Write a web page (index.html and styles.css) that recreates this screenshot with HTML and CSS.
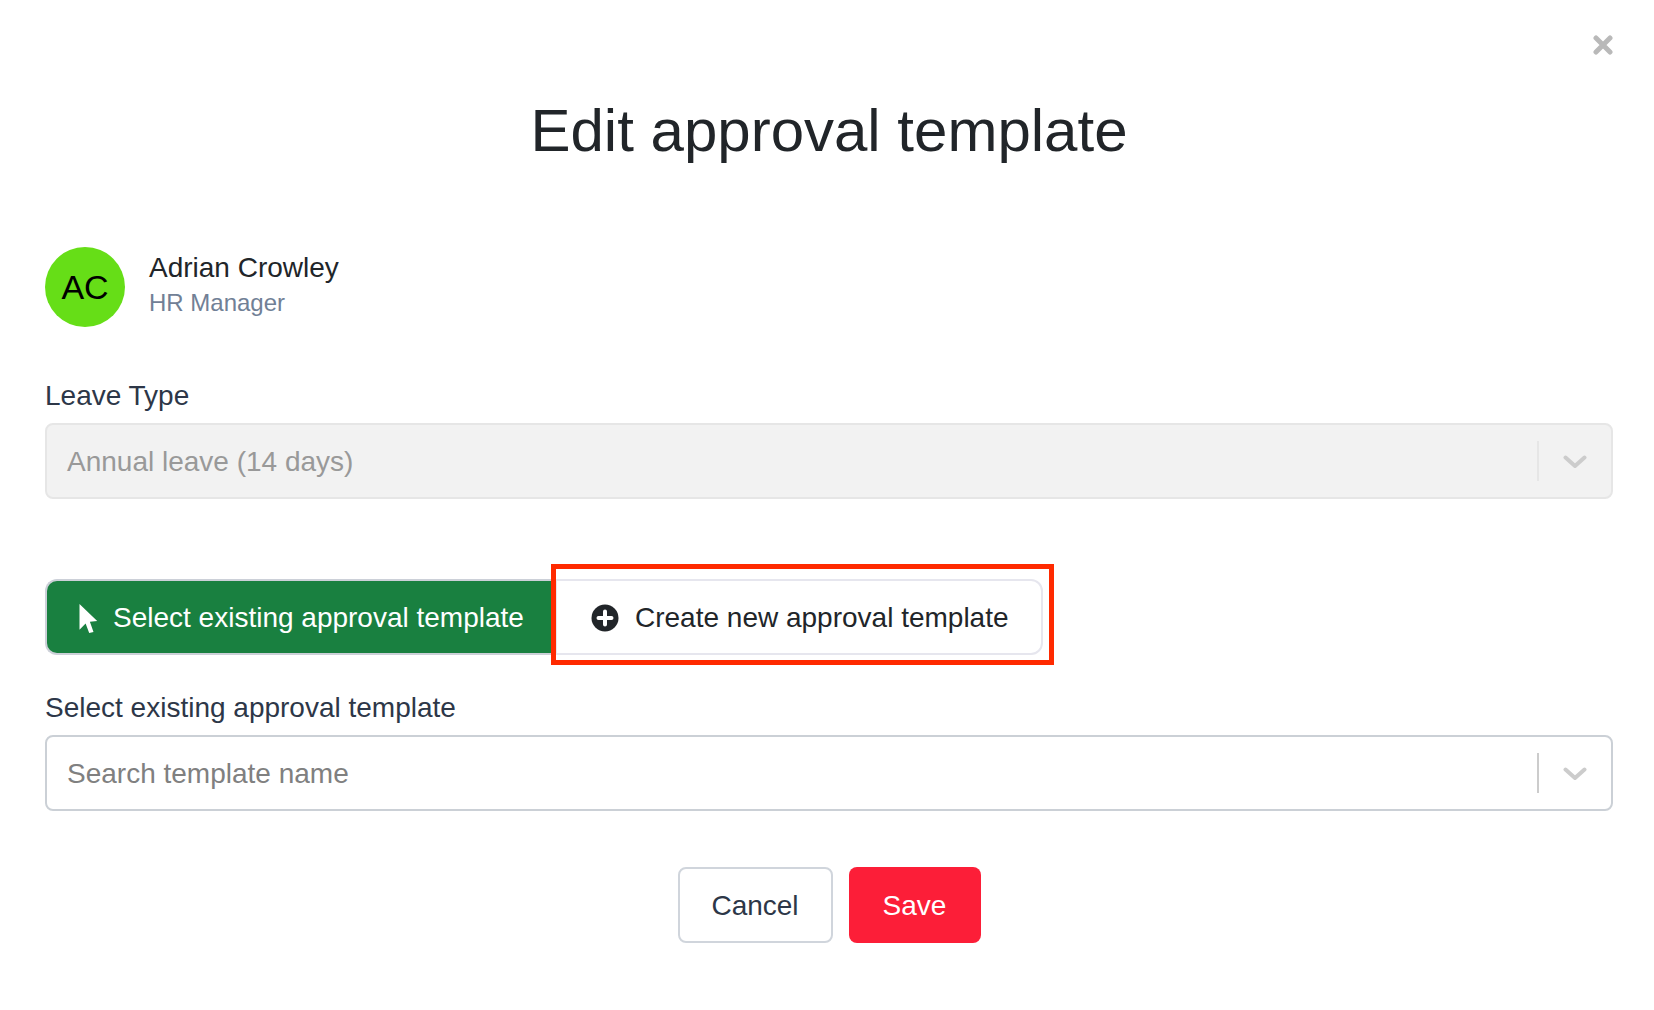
FILE: index.html
```html
<!DOCTYPE html>
<html lang="en">

<head>
    <meta charset="UTF-8">
    <title>Edit approval template</title>
    <link rel="stylesheet" href="styles.css">
</head>

<body>
    <div class="modal">
        <button class="close-btn" aria-label="Close">
            <svg width="20" height="20" viewBox="0 0 20 20">
                <path d="M3 3L17 17M17 3L3 17" stroke="#b9b9b9" stroke-width="5" stroke-linecap="round" fill="none" />
            </svg>
        </button>

        <h1 class="title">Edit approval template</h1>

        <div class="user">
            <div class="avatar">AC</div>
            <div class="user-info">
                <div class="user-name">Adrian Crowley</div>
                <div class="user-role">HR Manager</div>
            </div>
        </div>

        <label class="field-label">Leave Type</label>
        <div class="select select-disabled">
            <span class="select-value">Annual leave (14 days)</span>
            <span class="select-sep"></span>
            <svg class="select-arrow" width="24" height="14" viewBox="0 0 24 14">
                <path d="M2.5 2.5L12 11L21.5 2.5" stroke="#cccccc" stroke-width="4" fill="none" stroke-linecap="round" stroke-linejoin="round" />
            </svg>
        </div>

        <div class="toggle-group">
            <button class="toggle toggle-active">
                <svg width="19" height="29" viewBox="0 0 19 29">
                    <path d="M0.5 0L0.5 25.7L6.6 19.6L10.2 29L14.5 28L10.9 17.8L18.2 17.1Z" fill="#ffffff" />
                </svg>
                Select existing approval template
            </button>
            <button class="toggle toggle-new">
                <svg width="28" height="28" viewBox="0 0 28 28">
                    <circle cx="14" cy="14" r="13.5" fill="#212529" />
                    <path d="M14 7.5V20.5M7.5 14H20.5" stroke="#ffffff" stroke-width="4" stroke-linecap="round" />
                </svg>
                Create new approval template
            </button>
            <div class="highlight"></div>
        </div>

        <label class="field-label">Select existing approval template</label>
        <div class="select">
            <span class="select-value">Search template name</span>
            <span class="select-sep"></span>
            <svg class="select-arrow" width="24" height="14" viewBox="0 0 24 14">
                <path d="M2.5 2.5L12 11L21.5 2.5" stroke="#cccccc" stroke-width="4" fill="none" stroke-linecap="round" stroke-linejoin="round" />
            </svg>
        </div>

        <div class="actions">
            <button class="btn btn-cancel">Cancel</button>
            <button class="btn btn-save">Save</button>
        </div>
    </div>
</body>

</html>
```

FILE: styles.css
```css
* {
    box-sizing: border-box;
}

body {
    margin: 0;
    background: #fff;
    font-family: "Liberation Sans", Arial, sans-serif;
    color: #212529;
}

button {
    font-family: inherit;
}

.modal {
    position: relative;
    width: 1654px;
    height: 1010px;
    padding: 93px 41px 0 45px;
}

.close-btn {
    position: absolute;
    top: 35px;
    right: 41px;
    padding: 0;
    border: 0;
    background: none;
    display: flex;
}

.title {
    margin: 0 0 78px;
    text-align: center;
    font-size: 60px;
    line-height: 76px;
    font-weight: 400;
}

.user {
    display: flex;
    align-items: center;
    gap: 24px;
    margin-bottom: 51px;
}

.avatar {
    width: 80px;
    height: 80px;
    border-radius: 50%;
    background: #66de17;
    color: #000;
    font-size: 34px;
    display: flex;
    align-items: center;
    justify-content: center;
}

.user-info {
    margin-top: -4px;
}

.user-name {
    font-size: 28px;
    line-height: 36px;
}

.user-role {
    font-size: 24px;
    line-height: 34px;
    color: #718096;
}

.field-label {
    display: block;
    font-size: 28px;
    line-height: 36px;
    color: #2d3748;
    margin-bottom: 9px;
}

.select {
    height: 76px;
    border: 2px solid #cbd0d6;
    border-radius: 8px;
    display: flex;
    align-items: center;
    padding: 0 24px 0 20px;
    font-size: 28px;
    color: #808080;
}

.select-disabled {
    background: #f2f2f2;
    border-color: #e6e6e6;
    color: #999;
    margin-bottom: 80px;
}

.select-value {
    flex: 1;
    padding-top: 2px;
}

.select-arrow {
    margin-top: 2px;
}

.select-sep {
    width: 2px;
    height: 40px;
    background: #ccc;
    margin-right: 24px;
}

.select-disabled .select-sep {
    background: #e6e6e6;
}

.toggle-group {
    position: relative;
    display: flex;
    width: 998px;
    height: 76px;
    margin-bottom: 35px;
}

.toggle {
    height: 76px;
    display: flex;
    align-items: center;
    font-size: 28px;
    white-space: nowrap;
    border: 2px solid #e6e6ee;
}

.toggle-active {
    flex: none;
    width: 510px;
    background: #198040;
    border-color: #ccd0d8;
    border-right: 0;
    color: #fff;
    border-radius: 12px 0 0 12px;
    padding: 2px 0 0 32px;
    gap: 15px;
}

.toggle-new {
    flex: 1;
    background: #fff;
    color: #212529;
    border-radius: 0 12px 12px 0;
    padding: 2px 0 0 34px;
    gap: 16px;
}

.highlight {
    position: absolute;
    left: 506px;
    top: -15px;
    width: 503px;
    height: 101px;
    border: 5px solid #ff2a00;
}

.actions {
    display: flex;
    justify-content: center;
    gap: 16px;
    margin-top: 56px;
}

.btn {
    height: 76px;
    padding-top: 3px;
    font-size: 28px;
    border-radius: 8px;
}

.btn-cancel {
    width: 155px;
    background: #fff;
    border: 2px solid #d0d5dc;
    color: #2d3748;
}

.btn-save {
    width: 132px;
    background: #fc1e38;
    border: 0;
    color: #fff;
}
```
